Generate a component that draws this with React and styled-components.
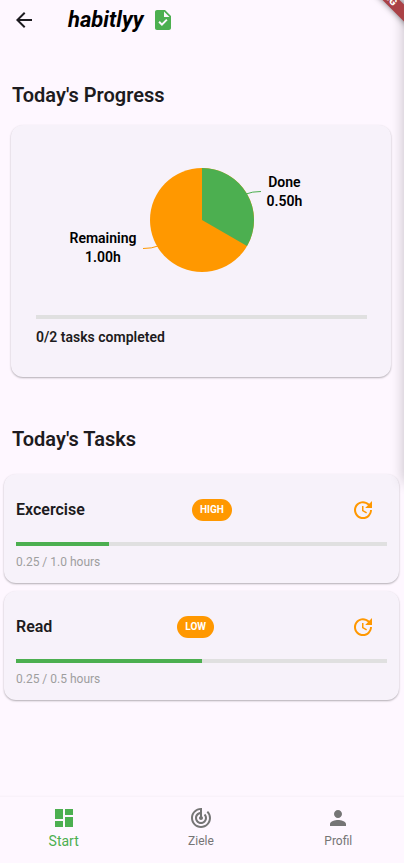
import React from "react";
import styled, { createGlobalStyle } from "styled-components";
import {
  MdArrowBack,
  MdTask,
  MdUpdate,
  MdDashboard,
  MdTrackChanges,
  MdPerson,
} from "react-icons/md";

const green = "#4caf50";
const orange = "#ff9800";

const GlobalStyle = createGlobalStyle`
  *, *::before, *::after { box-sizing: border-box; }
  body {
    margin: 0;
    background: #fef7ff;
    color: #1d1b20;
    font-family: Roboto, "Liberation Sans", sans-serif;
  }
  h1, h2, h3, p { margin: 0; }
`;

const Page = styled.div`
  position: relative;
  display: flex;
  flex-direction: column;
  min-height: 100vh;
  overflow: hidden;
`;

const EdgeShadow = styled.div`
  position: absolute;
  top: -20px;
  left: 100%;
  width: 20px;
  height: 502px;
  box-shadow: 0 0 14px rgba(0, 0, 0, 0.24);
  pointer-events: none;
`;

const DebugRibbon = styled.div`
  position: absolute;
  top: -13px;
  right: -30px;
  width: 100px;
  height: 12px;
  transform: rotate(45deg);
  background: #aa4146;
  color: #fff;
  box-shadow: 0 0 6px rgba(0, 0, 0, 0.5);
  font-size: 10px;
  line-height: 12px;
  font-weight: 900;
  text-align: center;
`;

const AppBar = styled.header`
  display: flex;
  align-items: center;
  height: 40px;
  padding: 0 12px;
`;

const IconButton = styled.button`
  display: flex;
  align-items: center;
  justify-content: center;
  width: ${(p) => p.$size}px;
  height: ${(p) => p.$size}px;
  padding: 0;
  border: 0;
  background: none;
  color: ${(p) => p.$color};
  cursor: pointer;
`;

const Brand = styled.h1`
  display: flex;
  align-items: center;
  gap: 8px;
  margin-left: 32px;
  color: #000;
  font-size: 22px;
  line-height: 28px;
  font-weight: 700;
  font-style: italic;
`;

const Content = styled.main`
  flex: 1;
  padding: 41px 4px 24px;
`;

const Section = styled.section`
  & + & {
    margin-top: 48px;
  }
`;

const SectionTitle = styled.h2`
  margin: 0 8px ${(p) => p.$gap}px;
  font-size: 20px;
  line-height: 28px;
  font-weight: 600;
`;

const Card = styled.article`
  border-radius: 12px;
  background: #f7f2fa;
  box-shadow: 0 1px 2px rgba(0, 0, 0, 0.3);
`;

const SummaryCard = styled(Card)`
  margin: 0 9px 0 7px;
  padding: 24px 24px 30px 25px;
`;

const Chart = styled.div`
  display: grid;
  grid-template-columns: 1fr 120px 1fr;
  gap: 5px;
  align-items: center;
  height: 142px;
  margin-bottom: 24px;
`;

const ChartLabel = styled.p`
  justify-self: ${(p) => p.$side};
  padding-top: ${(p) => p.$above || 0}px;
  padding-bottom: ${(p) => p.$below || 0}px;
  color: #000;
  font-size: 14px;
  line-height: 19px;
  font-weight: 600;
  text-align: center;
`;

const Track = styled.div`
  height: 4px;
  background: #e0e0e0;
`;

const Fill = styled.div`
  height: 100%;
  background: ${green};
`;

const SummaryText = styled.p`
  margin-top: 8px;
  font-size: 14px;
  line-height: 20px;
  font-weight: 600;
`;

const TaskList = styled.div`
  display: grid;
  gap: 8px;
`;

const TaskCard = styled(Card)`
  margin-right: 1px;
  padding: 12px;
`;

const TaskHead = styled.div`
  display: flex;
  align-items: center;
  justify-content: space-between;
  margin-bottom: 8px;
`;

const TaskName = styled.h3`
  font-size: 16px;
  line-height: 24px;
  font-weight: 600;
`;

const Priority = styled.span`
  padding: 0 8px;
  border-radius: 11px;
  background: ${orange};
  color: #fff;
  font-size: 10px;
  line-height: 22px;
  font-weight: 700;
`;

const Hours = styled.p`
  margin-top: 8px;
  color: #9e9e9e;
  font-size: 12px;
  line-height: 17px;
`;

const BottomNav = styled.nav`
  display: grid;
  grid-template-columns: repeat(3, 1fr);
  height: 66px;
  margin: 0 -3px 0 -5px;
  box-shadow: 0 0 3px rgba(0, 0, 0, 0.06);
`;

const NavItem = styled.a`
  display: flex;
  flex-direction: column;
  align-items: center;
  padding-top: 9px;
  color: ${(p) => (p.$active ? green : "#757575")};
  font-size: ${(p) => (p.$active ? 14 : 12)}px;
  line-height: 22px;
  text-decoration: none;
`;

function Progress({ label, value }) {
  return (
    <Track
      role="progressbar"
      aria-label={label}
      aria-valuemin={0}
      aria-valuemax={100}
      aria-valuenow={value}
    >
      <Fill style={{ width: `${value}%` }} />
    </Track>
  );
}

function Pie() {
  return (
    <svg width="120" height="120" viewBox="0 0 120 120" aria-hidden="true">
      <circle cx="60" cy="60" r="52" fill={orange} />
      <path d="M60 60V8A52 52 0 0 1 105.03 86Z" fill={green} />
      <path d="M104 34Q110 31.5 119 31.5" fill="none" stroke={green} />
      <path d="M16 86Q10 88.5 1 88.5" fill="none" stroke={orange} />
    </svg>
  );
}

const tasks = [
  { name: "Excercise", priority: "HIGH", hours: "0.25 / 1.0 hours", value: 25 },
  { name: "Read", priority: "LOW", hours: "0.25 / 0.5 hours", value: 50 },
];

const tabs = [
  { name: "Start", Icon: MdDashboard, active: true },
  { name: "Ziele", Icon: MdTrackChanges },
  { name: "Profil", Icon: MdPerson },
];

export default function App() {
  return (
    <>
      <GlobalStyle />
      <Page>
        <AppBar>
          <IconButton type="button" aria-label="Back" $size={24} $color="#1d1b20">
            <MdArrowBack size={24} />
          </IconButton>
          <Brand>
            habitlyy
            <MdTask size={24} color={green} />
          </Brand>
        </AppBar>
        <Content>
          <Section>
            <SectionTitle $gap={16}>Today's Progress</SectionTitle>
            <SummaryCard>
              <Chart>
                <ChartLabel $side="end" $above={56}>
                  Remaining
                  <br />
                  1.00h
                </ChartLabel>
                <Pie />
                <ChartLabel $side="start" $below={57}>
                  Done
                  <br />
                  0.50h
                </ChartLabel>
              </Chart>
              <Progress label="Tasks completed" value={0} />
              <SummaryText>0/2 tasks completed</SummaryText>
            </SummaryCard>
          </Section>
          <Section>
            <SectionTitle $gap={21}>Today's Tasks</SectionTitle>
            <TaskList>
              {tasks.map((task) => (
                <TaskCard key={task.name}>
                  <TaskHead>
                    <TaskName>{task.name}</TaskName>
                    <Priority>{task.priority}</Priority>
                    <IconButton
                      type="button"
                      aria-label={`Update ${task.name}`}
                      $size={48}
                      $color={orange}
                    >
                      <MdUpdate size={24} />
                    </IconButton>
                  </TaskHead>
                  <Progress label={task.name} value={task.value} />
                  <Hours>{task.hours}</Hours>
                </TaskCard>
              ))}
            </TaskList>
          </Section>
        </Content>
        <BottomNav>
          {tabs.map(({ name, Icon, active }) => (
            <NavItem
              key={name}
              href={`#${name.toLowerCase()}`}
              $active={active}
              aria-current={active ? "page" : undefined}
            >
              <Icon size={24} />
              {name}
            </NavItem>
          ))}
        </BottomNav>
        <EdgeShadow />
        <DebugRibbon>DEBUG</DebugRibbon>
      </Page>
    </>
  );
}
